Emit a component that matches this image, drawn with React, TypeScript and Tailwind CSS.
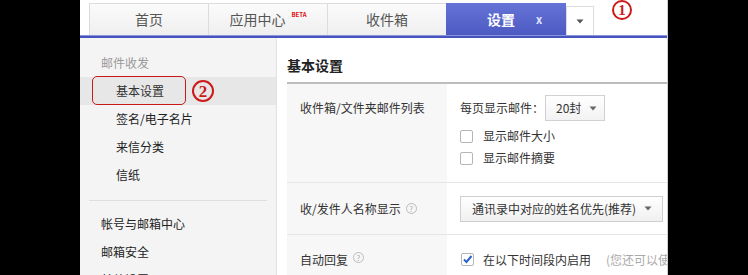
import React from 'react';

const font = { fontFamily: '"Noto Sans CJK SC", "Noto Sans", sans-serif' };

const Tab = ({ label, beta }: { label: string; beta?: boolean }): JSX.Element => (
  <div className="w-[120px] h-[32px] -mr-px border border-b-0 border-[#dcdcdc] bg-gradient-to-b from-[#fbfbfb] to-[#efefef] flex items-center justify-center text-[14px] text-[#555]">
    <span>{label}</span>
    {beta ? <span className="ml-[6px] -mt-[10px] text-[6px] font-bold text-[#e01010] leading-none">BETA</span> : null}
  </div>
);

const Help = (): JSX.Element => (
  <span className="ml-[5px] inline-flex w-[11px] h-[11px] rounded-full border border-[#bbb] text-[8px] leading-none text-[#aaa] items-center justify-center">?</span>
);

const Box = ({ checked }: { checked?: boolean }): JSX.Element => (
  <span className="w-[13px] h-[13px] rounded-[2px] border border-[#b5b5b5] bg-white flex items-center justify-center shrink-0">
    {checked ? (
      <svg width="11" height="11" viewBox="0 0 11 11">
        <path d="M2 5.5 L4.5 8 L9.5 2" fill="none" stroke="#2a64c8" strokeWidth="2" />
      </svg>
    ) : null}
  </span>
);

const Caret = (): JSX.Element => (
  <svg width="8" height="5" viewBox="0 0 8 5" className="ml-[8px]">
    <path d="M0.5 0.5 L7.5 0.5 L4 4.5 Z" fill="#666" />
  </svg>
);

const Mark = ({ n, size }: { n: string; size: string }): JSX.Element => (
  <span
    className={`${size} rounded-full border-2 border-[#cc1a1a] text-[#cc1a1a] font-bold flex items-center justify-center leading-none`}
    style={{ fontFamily: '"Liberation Serif", serif' }}
  >
    {n}
  </span>
);

export default function App(): JSX.Element {
  const items = ['签名/电子名片', '来信分类', '信纸'];
  return (
    <div className="w-[748px] h-[275px] bg-black overflow-hidden flex" style={font}>
      <div className="ml-[80px] w-[588px] h-full bg-white border-r border-[#cfcfcf] flex flex-col overflow-hidden">
        <div className="h-[35px] shrink-0 flex items-end pl-[9px]">
          <Tab label="首页" />
          <Tab label="应用中心" beta />
          <Tab label="收件箱" />
          <div className="w-[120px] h-[32px] bg-gradient-to-b from-[#6673d6] to-[#4d5ac2] flex items-center text-white">
            <span className="flex-1 text-center pl-[20px] text-[14px] font-bold">设置</span>
            <span className="w-[30px] text-[11px] font-bold text-[#e0e4ff]">x</span>
          </div>
          <div className="w-[28px] h-[29px] border border-b-0 border-[#dcdcdc] bg-white flex items-center justify-center">
            <svg width="8" height="5" viewBox="0 0 8 5">
              <path d="M0.5 0.5 L7.5 0.5 L4 4.5 Z" fill="#555" />
            </svg>
          </div>
          <div className="self-start ml-[18px] mt-[0px]">
            <Mark n="1" size="w-[20px] h-[20px] text-[15px]" />
          </div>
        </div>
        <div className="h-[3px] shrink-0 bg-[#4654bd] border-t border-[#8a94dc]" />
        <div className="flex flex-1 min-h-0">
          <div className="w-[197px] shrink-0 bg-[#f4f4f4] border-r border-[#e2e2e2] pt-[11px] text-[12px]">
            <div className="h-[28px] flex items-center pl-[21px] text-[#999]">邮件收发</div>
            <div className="relative h-[28px] bg-[#e7e7e7] flex items-center pl-[36px] text-[#333]">
              基本设置
              <div className="absolute left-[12px] top-[-1px] w-[94px] h-[29px] rounded-[5px] border-[1.5px] border-[#c81818]" />
              <div className="absolute left-[112px] top-[3px]">
                <Mark n="2" size="w-[22px] h-[22px] text-[17px]" />
              </div>
            </div>
            {items.map((t) => (
              <div key={t} className="h-[28px] flex items-center pl-[36px] text-[#222]">{t}</div>
            ))}
            <div className="mx-[9px] mt-[11px] mb-[9px] h-px bg-[#dedede]" />
            <div className="h-[28px] flex items-center pl-[21px] text-[#222]">帐号与邮箱中心</div>
            <div className="h-[28px] flex items-center pl-[21px] text-[#222]">邮箱安全</div>
            <div className="h-[28px] flex items-center pl-[21px] text-[#222]">其他设置</div>
          </div>
          <div className="flex-1 min-w-0 pl-[10px] text-[12px] text-[#333]">
            <div className="pt-[17px] h-[44px] text-[14px] font-bold text-[#222] leading-[20px]">基本设置</div>
            <div className="h-[2px] bg-[#bdbdbd]" />
            <div className="flex h-[99px] border-b border-[#e6e6e6]">
              <div className="w-[160px] shrink-0 bg-[#f7f7f7] pl-[13px] pt-[16px] leading-[16px]">收件箱/文件夹邮件列表</div>
              <div className="pl-[13px] pt-[11px]">
                <div className="flex items-center">
                  <span>每页显示邮件：</span>
                  <span className="ml-[1px] w-[60px] h-[26px] border border-[#d0d0d0] bg-gradient-to-b from-white to-[#f2f2f2] flex items-center pl-[10px] text-[#333]">
                    20封
                    <Caret />
                  </span>
                </div>
                <div className="mt-[5px] h-[20px] flex items-center gap-[10px]"><Box /><span>显示邮件大小</span></div>
                <div className="mt-[2px] h-[20px] flex items-center gap-[10px]"><Box /><span>显示邮件摘要</span></div>
              </div>
            </div>
            <div className="flex h-[52px] border-b border-[#e6e6e6]">
              <div className="w-[160px] shrink-0 bg-[#f7f7f7] pl-[13px] flex items-center">收/发件人名称显示<Help /></div>
              <div className="pl-[13px] flex items-center">
                <span className="w-[203px] h-[26px] border border-[#d0d0d0] bg-gradient-to-b from-white to-[#f0f0f0] flex items-center pl-[11px] shrink-0">
                  通讯录中对应的姓名优先(推荐)
                  <Caret />
                </span>
              </div>
            </div>
            <div className="flex h-[60px]">
              <div className="w-[160px] shrink-0 bg-[#f7f7f7] pl-[13px] pt-[17px] leading-[16px] flex items-start">自动回复<Help /></div>
              <div className="pl-[14px] pt-[18px] flex items-start gap-[9px] whitespace-nowrap">
                <Box checked />
                <span className="leading-[14px]">在以下时间段内启用</span>
                <span className="leading-[14px] ml-[6px] text-[#aaa]">(您还可以使用</span>
              </div>
            </div>
          </div>
        </div>
      </div>
    </div>
  );
}
